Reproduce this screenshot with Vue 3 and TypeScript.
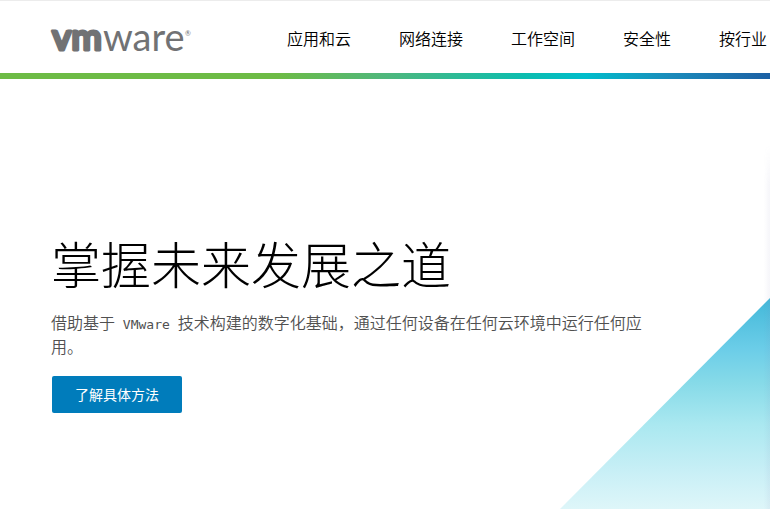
<script setup lang="ts">
interface NavItem {
  label: string
  href: string
}

const navItems: NavItem[] = [
  { label: '应用和云', href: '#apps' },
  { label: '网络连接', href: '#networking' },
  { label: '工作空间', href: '#workspace' },
  { label: '安全性', href: '#security' },
  { label: '按行业', href: '#industry' },
]
</script>

<template>
  <div class="page">
    <header class="header">
      <a class="logo" href="#home" aria-label="VMware">
        <svg width="144" height="32" viewBox="0 0 144 32" aria-hidden="true">
          <text class="mark" x="1" y="25">vm</text>
          <text class="word" x="52" y="26">ware</text>
          <text class="reg" x="134" y="11">®</text>
        </svg>
      </a>
      <nav class="nav">
        <a v-for="item in navItems" :key="item.href" :href="item.href">{{ item.label }}</a>
      </nav>
    </header>
    <div class="rainbow"></div>
    <main class="hero">
      <div class="triangle"></div>
      <div class="edge"></div>
      <div class="copy">
        <h1>掌握未来发展之道</h1>
        <p>借助基于<span class="latin"> VMware </span>技术构建的数字化基础，通过任何设备在任何云环境中运行任何应用。</p>
        <a class="cta" href="#learn">了解具体方法</a>
      </div>
    </main>
  </div>
</template>

<style>
body {
  margin: 0;
  background: #fff;
}
</style>

<style scoped>
.page {
  display: flex;
  flex-direction: column;
  min-height: 100vh;
  overflow: hidden;
  font-family: "Noto Sans CJK SC", sans-serif;
}
.header {
  display: flex;
  align-items: center;
  gap: 92px;
  height: 72px;
  padding-left: 51px;
  border-top: 1px solid #ececec;
}
.logo {
  display: flex;
  flex: none;
  padding-top: 8px;
}
.logo svg {
  overflow: visible;
}
.mark {
  font: 600 37px Lato, sans-serif;
  fill: #717274;
  stroke: #717274;
  stroke-width: 3px;
  stroke-linejoin: round;
}
.word {
  font: 400 38px Lato, sans-serif;
  fill: #717274;
}
.reg {
  font: 400 7px Lato, sans-serif;
  fill: #717274;
}
.nav {
  display: flex;
  gap: 48px;
  padding-top: 2px;
}
.nav a {
  flex: none;
  color: #000;
  font-size: 16px;
  font-weight: 350;
  line-height: 24px;
  text-decoration: none;
  white-space: nowrap;
}
.rainbow {
  height: 6px;
  background: linear-gradient(90deg, #6dbb45 0%, #6dbb45 36%, #4fb77c 50%, #0cbdaf 68%, #00bdcb 76%, #1b8bbb 87%, #1c60a4 100%);
}
.hero {
  position: relative;
  flex: 1;
  padding: 145px 51px 95px;
}
.triangle {
  position: absolute;
  right: 0;
  bottom: 0;
  width: 210px;
  height: 211px;
  background: linear-gradient(180deg, #43b8d9 0%, #6bcde8 24%, #86dae8 40%, #aae8f0 60%, #c8eff6 82%, #def6f9 100%);
  clip-path: polygon(100% 0, 100% 100%, 0 100%);
}
.edge {
  position: absolute;
  top: 66px;
  right: 0;
  bottom: 0;
  width: 6px;
  background: linear-gradient(90deg, rgba(130, 130, 180, 0), rgba(130, 130, 180, 0.08));
  mask-image: linear-gradient(180deg, transparent, #000 40px);
}
.copy {
  position: relative;
  max-width: 608px;
}
h1 {
  margin: 0;
  color: #000;
  font-size: 50px;
  font-weight: 300;
  line-height: 76px;
}
p {
  margin: 10px 0 18px;
  color: #505050;
  font-size: 16px;
  font-weight: 350;
  line-height: 24px;
}
.latin {
  font-family: "DejaVu Sans Mono", monospace;
  font-size: 13px;
  line-height: 1;
}
.cta {
  display: inline-block;
  padding: 0 23px;
  margin-left: 1px;
  border-radius: 2px;
  background: #007cbb;
  color: #fff;
  font-size: 14px;
  line-height: 37px;
  text-decoration: none;
}
</style>
